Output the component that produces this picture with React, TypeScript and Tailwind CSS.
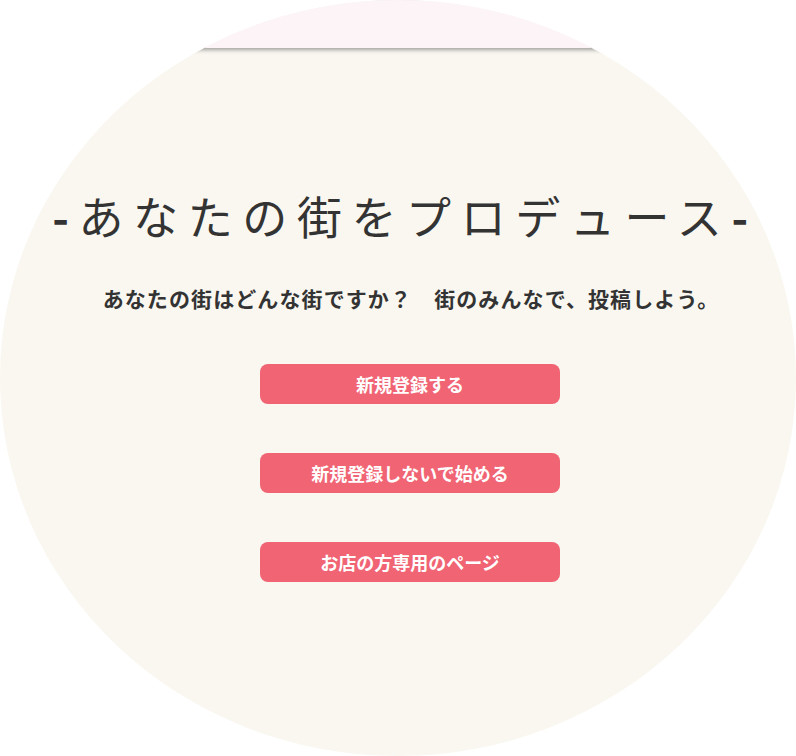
import React from 'react'

const buttons = ['新規登録する', '新規登録しないで始める', 'お店の方専用のページ']

export default function App() {
  return (
    <div className="w-[796px] h-[756px] bg-white overflow-hidden">
      <div
        className="w-[796px] h-[756px] rounded-[50%] overflow-hidden bg-[#f9f7f0] flex flex-col items-center text-[#333333]"
        style={{ fontFamily: '"Noto Sans CJK JP", "Noto Sans", sans-serif' }}
      >
        <header className="w-full h-12 shrink-0 bg-[#fdf4f7] shadow-[0_2px_4px_rgba(0,0,0,0.35)] relative z-10" />

        <h1 className="mt-[138px] text-[45px] leading-[60px] font-normal tracking-[9.6px] whitespace-nowrap pl-[14px]">
          <span className="font-bold">-</span>あなたの街をプロデュース<span className="font-bold">-</span>
        </h1>

        {/* copy block sits a little right of centre */}
        <p className="mt-[37px] ml-[26px] text-[21px] leading-[30px] font-bold tracking-[1.1px] whitespace-nowrap">
          あなたの街はどんな街ですか？　街のみんなで、投稿しよう。
        </p>

        <div className="mt-[51px] ml-[24px] flex flex-col gap-[49px]">
          {buttons.map((label) => (
            <button
              key={label}
              className="w-[300px] h-10 rounded-lg bg-[#f06474] text-white text-[18px] font-bold leading-none"
            >
              {label}
            </button>
          ))}
        </div>
      </div>
    </div>
  )
}
